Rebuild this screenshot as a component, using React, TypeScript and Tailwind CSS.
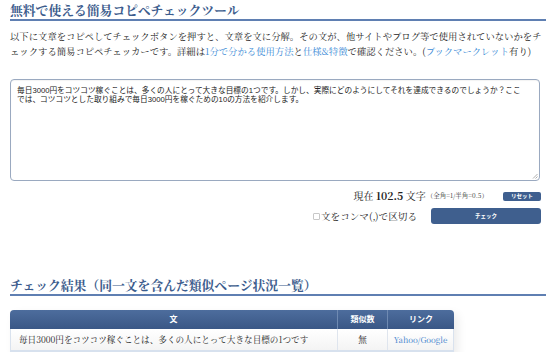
const serif = "font-['Noto_Serif_CJK_JP','Liberation_Serif','Noto_Sans_CJK_JP',serif]";
const sans = "font-['Liberation_Sans','Noto_Sans_CJK_JP',sans-serif]";

function SectionTitle({ children }: { children: React.ReactNode }) {
  return (
    <h2
      className={`${serif} w-[536px] border-b-2 border-[#5f7fb2] pb-[1px] text-[12.8px] font-bold leading-[17px] text-[#3c5c8d]`}
    >
      {children}
    </h2>
  );
}

function Link({ children }: { children: React.ReactNode }) {
  return <span className="text-[#3a8ad6]">{children}</span>;
}

export default function App() {
  return (
    <div className="relative h-[352px] w-[550px] overflow-hidden bg-white">
      <div className="flex flex-col pl-[10px] pt-[1px]">
        <SectionTitle>無料で使える簡易コピペチェックツール</SectionTitle>

        <p className={`${serif} mt-[8px] whitespace-nowrap text-[9.35px] leading-[15px] text-[#222]`}>
          以下に文章をコピペしてチェックボタンを押すと、文章を文に分解。その文が、他サイトやブログ等で使用されていないかをチ
          <br />
          ェックする簡易コピペチェッカーです。詳細は<Link>1分で分かる使用方法</Link>と<Link>仕様&amp;特徴</Link>
          で確認ください。(<Link>ブックマークレット</Link>有り)
        </p>

        <div className="relative mt-[20px] h-[102px] w-[530px] rounded-[4px] border border-[#9aa9c0] pl-[6px] pt-[6px] shadow-[inset_0_1px_1px_rgba(0,0,0,0.05)]">
          <div className={`${sans} whitespace-nowrap text-[7.7px] leading-[9px] text-[#222]`}>
            毎日3000円をコツコツ稼ぐことは、多くの人にとって大きな目標の1つです。しかし、実際にどのようにしてそれを達成できるのでしょうか？ここ
            <br />
            では、コツコツとした取り組みで毎日3000円を稼ぐための10の方法を紹介します。
          </div>
          <svg className="absolute bottom-[1px] right-[1px]" width="6" height="6" viewBox="0 0 6 6">
            <path d="M1 5.5 L5.5 1 M3.5 5.5 L5.5 3.5" stroke="#999" strokeWidth="0.8" />
          </svg>
        </div>

        <div className="mt-[9px] flex h-[12px] w-[531px] items-center justify-end">
          <span className={`${serif} whitespace-nowrap text-[10px] leading-[12px] text-[#222]`}>
            現在 <b className="text-[10.5px]">102.5</b> 文字
          </span>
          <span className={`${serif} ml-[1px] whitespace-nowrap text-[6.5px] leading-[12px] text-[#333]`}>（全角=1/半角=0.5）</span>
          <button
            className={`${sans} ml-[15px] h-[9px] w-[38px] rounded-[2px] bg-[#3f5f8f] text-[5.5px] font-bold leading-[9px] text-white`}
          >
            リセット
          </button>
        </div>

        <div className="mt-[6px] flex h-[16px] w-[531px] items-center justify-end">
          <span className="mr-[1px] h-[7px] w-[7px] rounded-[1px] border border-[#c8c8c8] bg-white" />
          <span className={`${serif} whitespace-nowrap text-[9.6px] leading-[12px] text-[#222]`}>文をコンマ(,)で区切る</span>
          <button
            className={`${sans} ml-[14px] h-[16px] w-[110px] rounded-[3px] bg-[#3f5f8e] text-[5.5px] font-bold text-white`}
          >
            チェック
          </button>
        </div>

        <div className="mt-[52px]">
          <SectionTitle>チェック結果（同一文を含んだ類似ページ状況一覧）</SectionTitle>
        </div>

        <div className="mt-[14px] w-[444px] overflow-hidden rounded-t-[4px] shadow-[4px_4px_10px_rgba(0,0,0,0.08)]">
          <div className={`${sans} flex h-[19px] bg-gradient-to-b from-[#4d6d9d] to-[#3a5786] text-[8px] font-bold leading-[19px] text-white`}>
            <div className="w-[328px] border-r border-[#6f8ab2] text-center">文</div>
            <div className="w-[50px] border-r border-[#6f8ab2] text-center">類似数</div>
            <div className="flex-1 text-center">リンク</div>
          </div>
          <div className={`${serif} flex h-[21px] border-x border-[#d9e2ee] bg-gradient-to-b from-white to-[#f4f4f4] text-[8.6px] leading-[21px] text-[#222]`}>
            <div className="w-[327px] whitespace-nowrap border-r border-[#dfe5ee] pl-[8px]">
              毎日3000円をコツコツ稼ぐことは、多くの人にとって大きな目標の1つです
            </div>
            <div className="w-[50px] border-r border-[#dfe5ee] text-center">無</div>
            <div className="flex-1 text-center text-[8px] text-[#3a7fcc]">Yahoo/Google</div>
          </div>
          <div className="h-[4px] bg-[#d7e1ee]" />
        </div>
      </div>
    </div>
  );
}
